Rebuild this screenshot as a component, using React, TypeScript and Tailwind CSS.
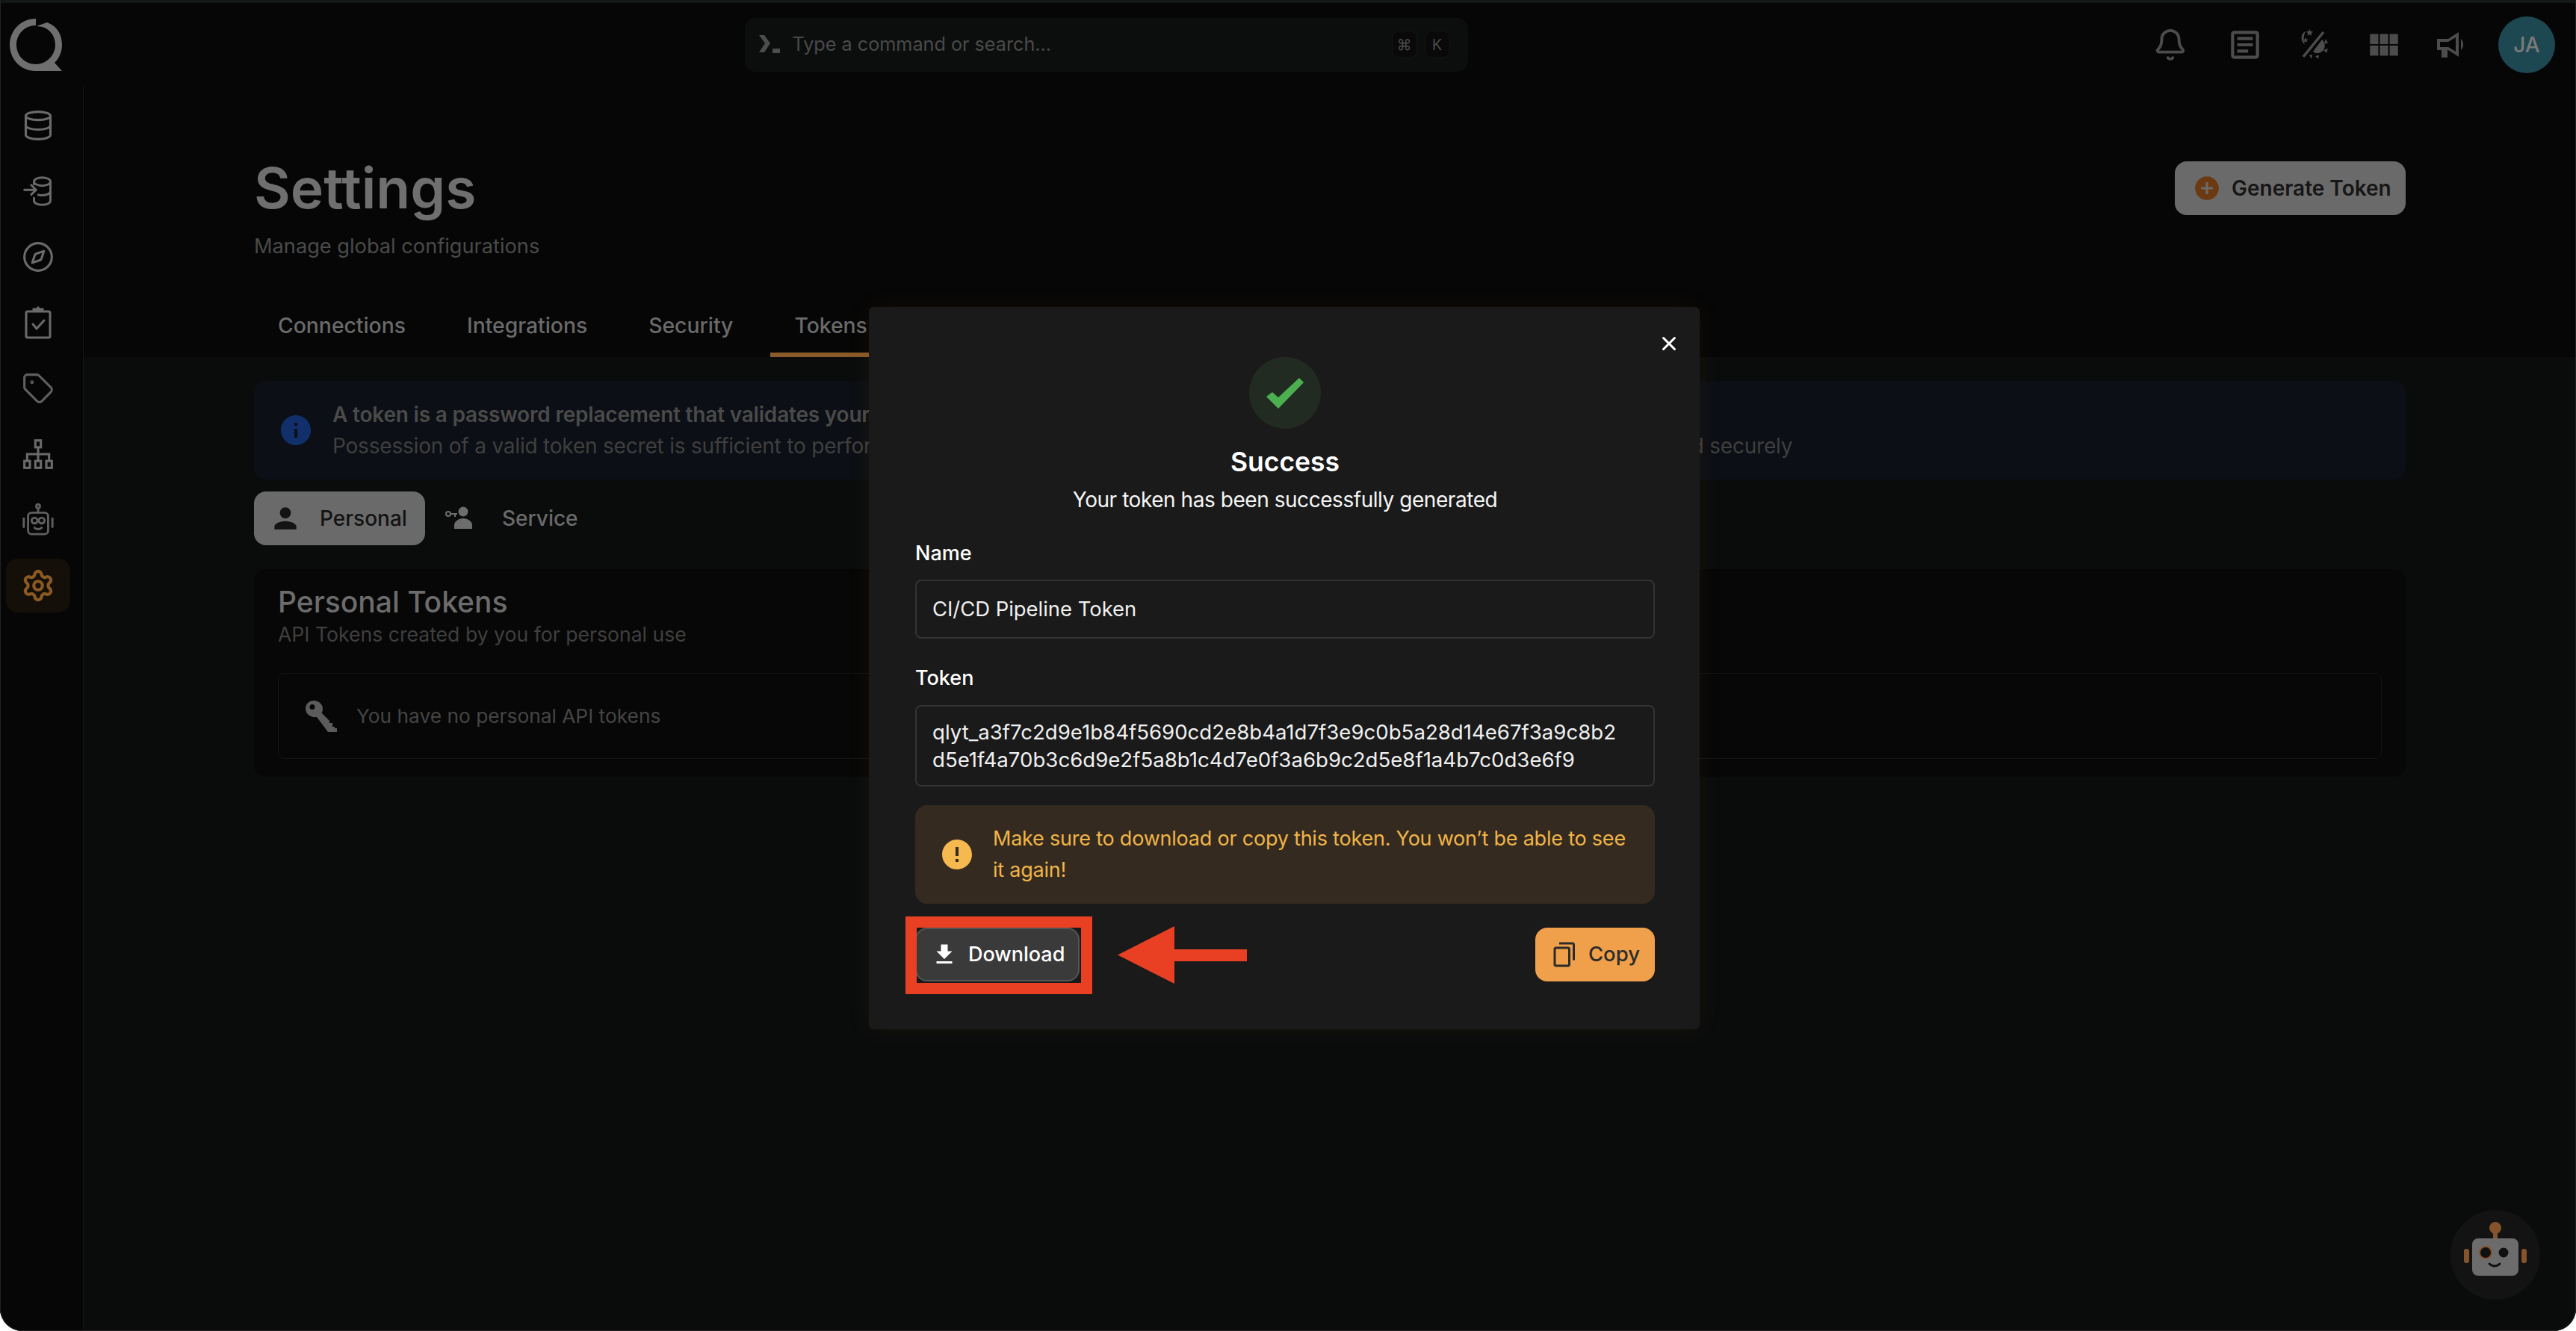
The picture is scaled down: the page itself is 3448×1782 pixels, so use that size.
import { Bell, Compass, Database, Settings, Tag, X } from "lucide-react";
import {
  MdAddCircle,
  MdContentCopy,
  MdError,
  MdFileDownload,
  MdInfo,
  MdOutlineArticle,
  MdPerson,
  MdViewModule,
} from "react-icons/md";

const TOKEN_LINE_1 = "qlyt_a3f7c2d9e1b84f5690cd2e8b4a1d7f3e9c0b5a28d14e67f3a9c8b2";
const TOKEN_LINE_2 = "d5e1f4a70b3c6d9e2f5a8b1c4d7e0f3a6b9c2d5e8f1a4b7c0d3e6f9";

function Logo() {
  return (
    <svg className="h-[70px] w-[70px]" viewBox="0 0 70 70" fill="#6f6f6f">
      <path d="M35 0v9C20 9 9 21 9 35s11 26 26 26c14 0 26-12 26-26 0-11-7-21-17-24l-8-1 14-5c14 5 20 17 20 30 0 10-4 18-10 24l10 11H34C15 70 0 54 0 35S15 0 35 0z" />
    </svg>
  );
}

function IngestIcon() {
  return (
    <svg className="h-[44px] w-[44px]" viewBox="0 0 24 24" fill="none" stroke="#6a6a6a" strokeWidth="1.6" strokeLinecap="round">
      <ellipse cx="15" cy="5" rx="6" ry="3" />
      <path d="M9 5v2M21 5v14c0 1.7-2.7 3-6 3s-6-1.300-6-3v-2M21 12c0 1.700-2.700 3-6 3-1 0-2-.1-2.800-.4" />
      <path d="M2 11h8M7 7.500 10.500 11 7 14.500" />
    </svg>
  );
}

function ChecklistIcon() {
  return (
    <svg className="h-[44px] w-[44px]" viewBox="0 0 44 44" fill="none" stroke="#6a6a6a" strokeWidth="3">
      <rect x="6" y="7" width="32" height="35" rx="2" />
      <path d="M16 7V4h4l2-2 2 2h4v3" fill="#6a6a6a" />
      <path d="M15 24l5 6 10-11" strokeLinecap="round" />
    </svg>
  );
}

function LineageIcon() {
  return (
    <svg className="h-[44px] w-[44px]" viewBox="0 0 24 24" fill="none" stroke="#6a6a6a" strokeWidth="1.7">
      <rect x="10" y="2" width="4" height="5" />
      <rect x="2" y="17" width="4" height="5" />
      <rect x="10" y="17" width="4" height="5" />
      <rect x="18" y="17" width="4" height="5" />
      <path d="M12 7v10M4 17v-5h16v5" />
    </svg>
  );
}

function BotIcon() {
  return (
    <svg className="h-[46px] w-[46px]" viewBox="0 0 24 24" fill="none" stroke="#5f5f5f" strokeWidth="1.5" strokeLinecap="round">
      <circle cx="12" cy="2.500" r="1.300" />
      <path d="M12 4v3" />
      <rect x="5" y="7" width="14" height="15" rx="2.500" />
      <circle cx="9.500" cy="12.500" r="2" />
      <circle cx="14.500" cy="12.500" r="2" />
      <path d="M9.500 17.500c1.500 1.200 3.500 1.200 5 0M2 11v6M22 11v6" />
    </svg>
  );
}

function ServiceIcon() {
  return (
    <svg className="h-[40px] w-[40px]" viewBox="0 0 40 40" fill="#6d6d6d">
      <circle cx="25" cy="11" r="6.500" />
      <path d="M13 34v-5c0-5 6-9 12-9s12 4 12 9v5z" />
      <circle cx="5" cy="14" r="3" fill="none" stroke="#6d6d6d" strokeWidth="2" />
      <path d="M8 13h9v2h-2v3h-2v-3H8z" />
    </svg>
  );
}

function KeyIcon() {
  return (
    <svg className="h-[42px] w-[42px]" viewBox="0 0 42 42" fill="#5c5c5c" fillRule="evenodd">
      <path d="M11 0c7 0 12 5 12 11 0 2-.5 4-1.500 5.500L32 27v3h4v5h3v2h3v5H30L15 22C7 23 0 18 0 11S5 0 11 0zM9 5a3.500 3.500 0 1 0 0 7 3.500 3.500 0 0 0 0-7z" />
    </svg>
  );
}

function ThemeIcon() {
  return (
    <svg className="h-[44px] w-[44px]" viewBox="0 0 44 44" fill="#4c4c4c">
      <path d="M11 4C5 6 3 16 10 22c-2-5-2-12 1-18z" />
      <path d="M17 2l1.500 4 4 .3-3 2.500 1 4-3.500-2.200-3.500 2.200 1-4-3-2.500 4-.3z" transform="translate(2 -1) scale(.85)" />
      <path d="M11 12l1 2.500 2.500.2-2 1.600.7 2.500-2.200-1.400-2.200 1.400.7-2.500-2-1.600 2.500-.2z" />
      <path d="M35 5 8 38" stroke="#4c4c4c" strokeWidth="3.500" />
      <path d="M33 15c5 4 5 12 0 16-4 3-9 3-12 0z" />
      <path d="M38 14l3 6h-5zM41 27l-2 6-4-4zM29 36l-1 5-4-4zM20 35l-1 6-3-5z" />
    </svg>
  );
}

function MegaphoneIcon() {
  return (
    <svg className="h-[36px] w-[40px]" viewBox="0 0 40 36" fill="#4c4c4c" fillRule="evenodd">
      <path d="M1 10h15L30 1v33L16 25h-1v10H7V25H1zM5 14v7h11l10 6V8l-10 6z" />
      <path d="M33 10c4 4 4 11 0 15z" />
    </svg>
  );
}

function TerminalIcon() {
  return (
    <svg className="h-[28px] w-[30px]" viewBox="0 0 30 28" fill="#4d4d4d">
      <path d="M0 1h7l8 11-8 12H0l8-12z" />
      <rect x="18" y="19" width="10" height="6" />
    </svg>
  );
}

function CheckMark() {
  return (
    <svg className="h-[41px] w-[50px]" viewBox="0 0 50 41" fill="#4caf50">
      <path d="M0 25l8-6 8 7L44 0l6 6-34 35z" />
    </svg>
  );
}

function RobotFace() {
  return (
    <svg className="h-[88px] w-[84px]" viewBox="0 0 84 88" fill="none">
      <circle cx="42" cy="8" r="8" fill="#85542a" />
      <rect x="39" y="14" width="6" height="8" fill="#85542a" />
      <rect x="0" y="36" width="7" height="19" rx="3" fill="#85542a" />
      <rect x="77" y="36" width="7" height="19" rx="3" fill="#85542a" />
      <rect x="11" y="22" width="62" height="50" rx="8" fill="#6c6c6c" />
      <circle cx="29" cy="41" r="8" fill="#101010" stroke="#85542a" strokeWidth="2" />
      <circle cx="53" cy="41" r="6.500" fill="#101010" />
      <path d="M34 56c4 4 10 4 14 0" stroke="#101010" strokeWidth="3" strokeLinecap="round" />
    </svg>
  );
}

function SideItem({ active, children }: { active?: boolean; children: React.ReactNode }) {
  return (
    <div
      className={
        active
          ? "flex h-[72px] w-[86px] items-center justify-center rounded-[16px] bg-[#150f09]"
          : "flex h-[72px] w-[86px] items-center justify-center"
      }
    >
      {children}
    </div>
  );
}

function Kbd({ children }: { children: React.ReactNode }) {
  return (
    <span className="flex h-[37px] w-[34px] items-center justify-center rounded-[10px] border border-[#151515] bg-[#090909] text-[20px] text-[#4a4a4a]">
      {children}
    </span>
  );
}

function Field({ label, tall, children }: { label: string; tall?: boolean; children: React.ReactNode }) {
  return (
    <div>
      <div className="text-[27px] font-medium leading-[34px] text-white">{label}</div>
      <div
        className={
          tall
            ? "mt-[19px] flex h-[109px] flex-col justify-center rounded-[8px] border-2 border-[#333333] px-[21px] text-[27.6px] leading-[37px] text-[#f0f0f0]"
            : "mt-[18px] flex h-[79px] items-center rounded-[8px] border-2 border-[#333333] px-[21px] text-[27.4px] text-[#f0f0f0]"
        }
      >
        {children}
      </div>
    </div>
  );
}

function TokenModal() {
  return (
    <div className="absolute left-[1163px] top-[411px] h-[967px] w-[1112px] rounded-[6px] bg-[#1a1a1a] pl-[62px] pr-[60px] pt-[67px] shadow-[0_0_30px_rgba(120,70,20,0.12)]">
      <button type="button" className="absolute right-[26px] top-[34px] text-white">
        <X size={30} strokeWidth={2.4} />
      </button>
      <div className="flex flex-col items-center">
        <div className="flex h-[96px] w-[96px] items-center justify-center rounded-full bg-[#222b22]">
          <CheckMark />
        </div>
        <div className="mt-[20px] text-[35.500px] font-semibold leading-[50px] text-white">Success</div>
        <div className="mt-[5px] text-[28px] leading-[40px] tracking-[-0.45px] text-[#f5f5f5]">
          Your token has been successfully generated
        </div>
      </div>
      <div className="mt-[35px] flex flex-col gap-[36px]">
        <Field label="Name">CI/CD Pipeline Token</Field>
        <Field label="Token" tall>
          <div>{TOKEN_LINE_1}</div>
          <div>{TOKEN_LINE_2}</div>
        </Field>
      </div>
      <div className="mt-[25px] flex h-[132px] items-center gap-[24px] rounded-[16px] bg-[#342a20] pl-[32px] pr-[30px]">
        <MdError size={48} color="#f5b950" className="shrink-0" />
        <p className="text-[27px] leading-[42px] tracking-[-0.22px] text-[#f0b548]">
          Make sure to download or copy this token. You won’t be able to see it again!
        </p>
      </div>
      <div className="mt-[32px] flex items-center justify-between">
        <button
          type="button"
          className="flex h-[72px] w-[220px] items-center gap-[14px] rounded-[16px] border-2 border-[#555555] bg-[#3a3a3a] pl-[19px] text-[27px] font-medium text-white"
        >
          <MdFileDownload size={36} />
          Download
        </button>
        <button
          type="button"
          className="flex h-[72px] w-[160px] items-center justify-center gap-[15px] rounded-[16px] bg-[#f0a04a] text-[27.500px] font-medium text-[#2b2b2b]"
        >
          <MdContentCopy size={36} className="-scale-x-100" />
          Copy
        </button>
      </div>
    </div>
  );
}

function Annotation() {
  return (
    <>
      <div className="absolute left-[1212px] top-[1227px] h-[104px] w-[250px] border-[15px] border-[#e94024]" />
      <svg className="absolute left-[1496px] top-[1240px] h-[77px] w-[173px]" viewBox="0 0 173 77" fill="#e94024">
        <path d="M0 38.500 76 0v31h97v16H76v30z" />
      </svg>
    </>
  );
}

export default function App() {
  return (
    <div className="relative flex h-[1782px] w-[3448px] flex-col overflow-hidden rounded-b-[30px] bg-black font-['Inter','Noto_Sans',sans-serif]">
      <div className="h-[4px] shrink-0 bg-[#141818]" />
      {/* Top bar */}
      <header className="flex h-[111px] shrink-0 items-center justify-between bg-[#060606] pl-[13px] pr-[28px]">
        <Logo />
        <div className="ml-[-4px] flex h-[72px] w-[968px] items-center rounded-[14px] bg-[#0c0e0e] pl-[19px] pr-[24px]">
          <TerminalIcon />
          <span className="ml-[15px] flex-1 text-[25.200px] text-[#4a4a4a]">Type a command or search...</span>
          <div className="flex gap-[10px]">
            <Kbd>⌘</Kbd>
            <Kbd>K</Kbd>
          </div>
        </div>
        <div className="flex items-center">
          <Bell size={46} color="#4c4c4c" strokeWidth={2} />
          <MdOutlineArticle size={50} color="#4c4c4c" className="ml-[52px]" />
          <div className="ml-[45px]"><ThemeIcon /></div>
          <MdViewModule size={50} color="#4c4c4c" className="ml-[47px]" />
          <div className="ml-[45px]"><MegaphoneIcon /></div>
          <div className="ml-[43px] flex h-[76px] w-[76px] items-center justify-center rounded-full bg-[#1d4852] text-[28px] font-medium text-[#7a7a7a]">
            JA
          </div>
        </div>
      </header>

      <div className="flex min-h-0 flex-1">
        {/* Sidebar */}
        <aside className="flex w-[112px] shrink-0 flex-col items-center gap-[16px] border-r border-[#141414] bg-[#060606] pr-[10px] pt-[17px]">
          <SideItem><Database size={44} color="#6a6a6a" strokeWidth={1.7} /></SideItem>
          <SideItem><IngestIcon /></SideItem>
          <SideItem><Compass size={44} color="#6a6a6a" strokeWidth={1.7} /></SideItem>
          <SideItem><ChecklistIcon /></SideItem>
          <SideItem><Tag size={44} color="#5f5f5f" strokeWidth={1.7} /></SideItem>
          <SideItem><LineageIcon /></SideItem>
          <SideItem><BotIcon /></SideItem>
          <SideItem active><Settings size={46} color="#8a5a22" strokeWidth={2.2} /></SideItem>
        </aside>

        <main className="flex min-w-0 flex-1 flex-col">
          {/* Page header */}
          <div className="h-[363px] shrink-0 bg-[#060606] pl-[228px] pr-[228px]">
            <div className="flex items-start justify-between pt-[101px]">
              <div>
                <h1 className="text-[75px] font-semibold leading-[72px] text-[#6f6f6f]">Settings</h1>
                <p className="mt-[24px] text-[27.200px] leading-[36px] text-[#4a4a4a]">Manage global configurations</p>
              </div>
              <button
                type="button"
                className="flex h-[72px] w-[309px] items-center gap-[14px] rounded-[16px] bg-[#6a6a6a] pl-[24px] text-[28px] font-semibold text-[#161616]"
              >
                <MdAddCircle size={38} color="#6b3a12" />
                Generate Token
              </button>
            </div>
            <nav className="mt-[53px] flex gap-[18px] text-[28.300px] font-medium leading-[44px] text-[#6a6a6a]">
              <span className="px-[32px] pb-[20px] pt-[13px]">Connections</span>
              <span className="px-[32px] pb-[20px] pt-[13px]">Integrations</span>
              <span className="px-[32px] pb-[20px] pt-[13px]">Security</span>
              <span className="rounded-t-[4px] border-b-[6px] border-[#8a5a28] px-[32px] pb-[14px] pt-[13px]">Tokens</span>
            </nav>
          </div>

          {/* Page body */}
          <div className="flex-1 bg-[#0a0c0c] px-[228px] pt-[32px]">
            <div className="flex h-[132px] items-center gap-[25px] rounded-[16px] bg-[#0c0f15] pl-[32px]">
              <MdInfo size={48} color="#11306b" />
              <div className="text-[28px] leading-[42px] tracking-[-0.2px]">
                <div className="font-semibold text-[#4a4a4a]">A token is a password replacement that validates your identity</div>
                <div className="text-[#3f3f3f]">
                  Possession of a valid token secret is sufficient to perform any action on the platform with your privileges, so make sure to keep tokens stored securely
                </div>
              </div>
            </div>

            <div className="mt-[16px] flex items-center gap-[26px]">
              <div className="flex h-[72px] w-[229px] items-center gap-[24px] rounded-[16px] bg-[#6a6a6a] pl-[20px] text-[28px] font-medium text-[#131313]">
                <MdPerson size={44} />
                Personal
              </div>
              <div className="flex items-center gap-[37px] text-[28px] font-medium text-[#6a6a6a]">
                <ServiceIcon />
                Service
              </div>
            </div>

            <section className="mt-[32px] h-[278px] rounded-[16px] bg-[#070707] px-[32px] pt-[20px]">
              <h2 className="text-[39px] font-medium leading-[48px] text-[#6c6c6c]">Personal Tokens</h2>
              <p className="text-[26.600px] leading-[38px] text-[#3f3f3f]">API Tokens created by you for personal use</p>
              <div className="mt-[33px] flex h-[115px] items-center gap-[26px] rounded-[8px] border border-[#131313] pl-[36px]">
                <KeyIcon />
                <span className="text-[26.300px] text-[#454545]">You have no personal API tokens</span>
              </div>
            </section>
          </div>
        </main>
      </div>

      <TokenModal />
      <Annotation />

      {/* Assistant launcher */}
      <div className="absolute left-[3280px] top-[1620px] flex h-[120px] w-[120px] items-center justify-center rounded-full bg-[#131313]">
        <RobotFace />
      </div>

      {/* Window edge */}
      <div className="pointer-events-none absolute inset-0 rounded-b-[30px] border-x border-b border-[#222222]" />
    </div>
  );
}
